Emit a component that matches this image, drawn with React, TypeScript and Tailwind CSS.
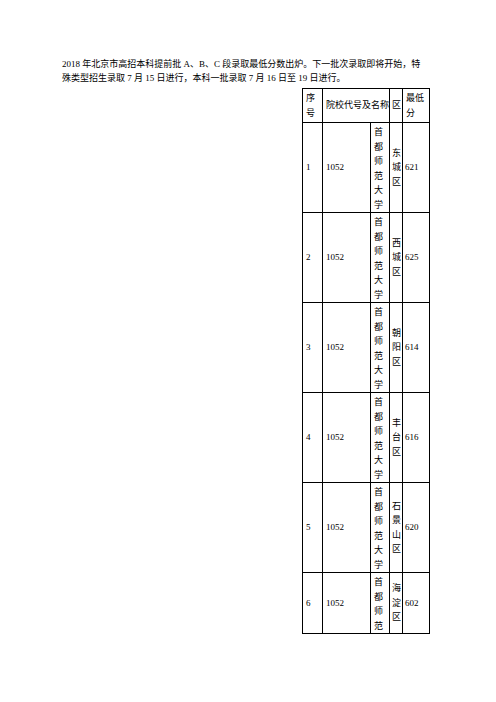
import React from "react";

const rows = [
  { n: "1", d: "东城区", s: "621", name: "首都师范大学" },
  { n: "2", d: "西城区", s: "625", name: "首都师范大学" },
  { n: "3", d: "朝阳区", s: "614", name: "首都师范大学" },
  { n: "4", d: "丰台区", s: "616", name: "首都师范大学" },
  { n: "5", d: "石景山区", s: "620", name: "首都师范大学" },
  { n: "6", d: "海淀区", s: "602", name: "首都师范" },
];

function Chars({ text }: { text: string }) {
  return (
    <div className="flex flex-col items-start">
      {text.split("").map((c, i) => (
        <span key={i} className="block">
          {c}
        </span>
      ))}
    </div>
  );
}

export default function App() {
  return (
    <div
      className="w-[496px] h-[702px] bg-white text-black text-[9px] leading-[14.5px]"
      style={{ fontFamily: '"Liberation Serif", "Noto Sans CJK SC", serif' }}
    >
      <div className="pt-[57px] pl-[62px] leading-[14px]">
        <span className="block whitespace-nowrap">
          2018 年北京市高招本科提前批 A、B、C 段录取最低分数出炉。下一批次录取即将开始，特
        </span>
        <span className="block whitespace-nowrap">
          殊类型招生录取 7 月 15 日进行，本科一批录取 7 月 16 日至 19 日进行。
        </span>
      </div>
      <div className="pl-[302px] pt-[3px]">
        <table className="table-fixed border-collapse border border-black w-[127px]">
          <colgroup>
            <col className="w-[20px]" />
            <col className="w-[48px]" />
            <col className="w-[19px]" />
            <col className="w-[13px]" />
            <col className="w-[27px]" />
          </colgroup>
          <tbody>
            <tr>
              <td className="border border-black align-top px-[3px] pt-[2px] pb-[2px]">
                <Chars text="序号" />
              </td>
              <td
                colSpan={2}
                className="border border-black align-middle px-[3px] whitespace-nowrap"
              >
                院校代号及名称
              </td>
              <td className="border border-black align-middle px-[2px]">区</td>
              <td className="border border-black align-top px-[3px] pt-[2px] pb-[2px]">
                最低
                <br />分
              </td>
            </tr>
            {rows.map((r) => (
              <tr key={r.n}>
                <td className="border border-black align-middle px-[3px]">{r.n}</td>
                <td className="border border-black align-middle px-[3px]">1052</td>
                <td className="border border-black align-top px-[3px] pt-[2px] pb-0">
                  <Chars text={r.name} />
                </td>
                <td className="border border-black align-middle px-[2px]">
                  <Chars text={r.d} />
                </td>
                <td className="border border-black align-middle px-[2px]">{r.s}</td>
              </tr>
            ))}
          </tbody>
        </table>
      </div>
    </div>
  );
}
